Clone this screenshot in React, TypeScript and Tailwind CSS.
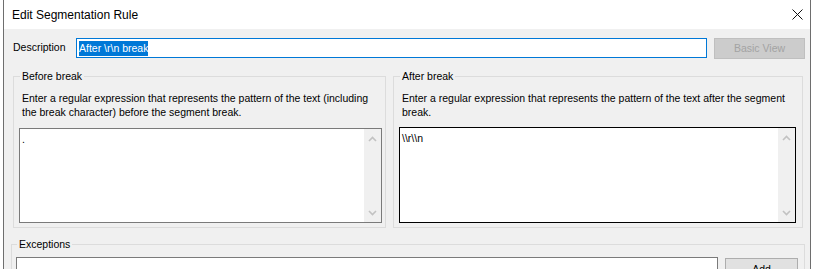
const Chevron = ({ up }: { up?: boolean }) => (
  <svg width="9" height="6" viewBox="0 0 9 6" className="block">
    <polyline
      points={up ? "1,5 4.5,1.5 8,5" : "1,1 4.5,4.5 8,1"}
      fill="none"
      stroke="#c2c2c2"
      strokeWidth="1.6"
    />
  </svg>
);

const TextArea = ({
  text,
  focused,
  className,
}: {
  text: string;
  focused?: boolean;
  className: string;
}) => (
  <div
    className={`flex bg-white border ${focused ? "border-black" : "border-[#7a7a7a]"} ${className}`}
  >
    <div className="flex-1 pl-[2px] pt-[3px] leading-[14px] text-black">{text}</div>
    {/* scrollbar (disabled) */}
    <div className="w-[17px] bg-[#f0f0f0] flex flex-col items-center justify-between pt-[7px] pb-[6px]">
      <Chevron up />
      <Chevron />
    </div>
  </div>
);

const App = () => {
  return (
    <div
      className="w-[813px] h-[269px] overflow-hidden bg-white flex"
      style={{ fontFamily: '"Liberation Sans", Arial, sans-serif' }}
    >
      {/* Window */}
      <div className="ml-[3px] w-[808px] h-[300px] border-x border-[#6e6e6e] flex flex-col">
        {/* Title bar */}
        <div className="h-[29px] shrink-0 bg-white flex items-center justify-between pl-[8px] pr-[7px]">
          <span className="text-[12px] text-black">Edit Segmentation Rule</span>
          <svg width="11" height="11" viewBox="0 0 11 11">
            <path d="M0.5 0.5 L10.5 10.5 M10.5 0.5 L0.5 10.5" stroke="#111" strokeWidth="1" />
          </svg>
        </div>

        {/* Client area */}
        <div className="flex-1 bg-[#f0f0f0] pt-[9px] text-[10.5px] text-black">
          {/* Description row */}
          <div className="flex items-start pl-[9px]">
            <div className="w-[63px] h-[20px] flex items-center">Description</div>
            <div className="w-[631px] h-[20px] bg-white border border-[#0078d7] flex items-center pl-[2px]">
              <span className="bg-[#0078d7] text-white leading-[15px]">After \r\n break</span>
            </div>
            <div className="ml-[7px] w-[91px] h-[21px] bg-[#cccccc] border border-[#bfbfbf] flex items-center justify-center text-[#a3a3a3]">
              Basic View
            </div>
          </div>

          {/* Before / After */}
          <div className="flex mt-[10px] pl-[9px]">
            <fieldset className="w-[373px] h-[159px] border border-[#dcdcdc]">
              <legend className="ml-[6px] px-[2px] leading-[14px]">Before break</legend>
              <p className="mt-[8px] pl-[8px] leading-[14px] whitespace-nowrap">
                Enter a regular expression that represents the pattern of the text (including
                <br />
                the break character) before the segment break.
              </p>
              <TextArea text="." className="mt-[9px] ml-[5px] w-[363px] h-[95px]" />
            </fieldset>

            <fieldset className="ml-[7px] w-[410px] h-[159px] border border-[#dcdcdc]">
              <legend className="ml-[6px] px-[2px] leading-[14px]">After break</legend>
              <p className="mt-[8px] pl-[8px] leading-[14px] whitespace-nowrap">
                Enter a regular expression that represents the pattern of the text after the segment
                <br />
                break.
              </p>
              <TextArea text="\\r\\n" focused className="mt-[8px] ml-[5px] w-[397px] h-[96px]" />
            </fieldset>
          </div>

          {/* Exceptions */}
          <fieldset className="mt-[9px] ml-[7px] w-[794px] h-[80px] border border-[#dcdcdc]">
            <legend className="ml-[5px] px-[2px] leading-[14px]">Exceptions</legend>
            <div className="flex items-start mt-[6px] ml-[4px]">
              <div className="w-[702px] h-[40px] bg-white border border-[#7a7a7a]" />
              <div className="ml-[7px] mt-[1px] w-[73px] h-[23px] bg-[#e1e1e1] border border-[#adadad] flex items-center justify-center">
                Add
              </div>
            </div>
          </fieldset>
        </div>
      </div>
    </div>
  );
};

export default App;
